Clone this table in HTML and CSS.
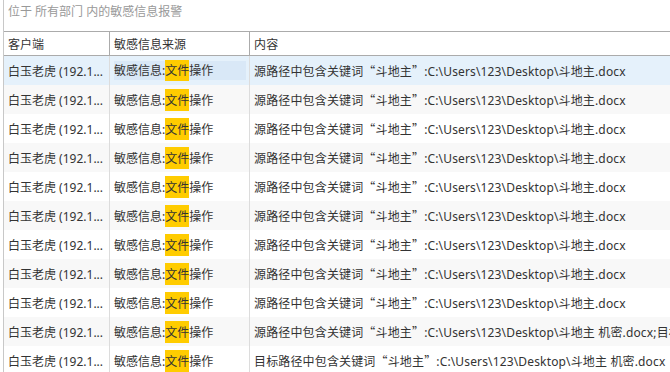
FILE: index.html
```html
<!DOCTYPE html>
<html lang="zh">
<head>
<meta charset="utf-8">
<link rel="stylesheet" href="styles.css">
</head>
<body>
<div class="panel">
  <div class="title">位于 所有部门 内的敏感信息报警</div>
  <div class="table">
    <div class="row head">
      <div class="cell c1">客户端</div>
      <div class="cell c2">敏感信息来源</div>
      <div class="cell c3">内容</div>
    </div>
    <div class="row sel">
      <div class="cell c1">白玉老虎 (192.1...</div>
      <div class="cell c2"><span class="focus">敏感信息:<mark>文件</mark>操作</span></div>
      <div class="cell c3">源路径中包含关键词<span class="q">“</span>斗地主<span class="q">”</span>:C:\Users\123\Desktop\斗地主.docx</div>
    </div>
    <div class="row alt">
      <div class="cell c1">白玉老虎 (192.1...</div>
      <div class="cell c2">敏感信息:<mark>文件</mark>操作</div>
      <div class="cell c3">源路径中包含关键词<span class="q">“</span>斗地主<span class="q">”</span>:C:\Users\123\Desktop\斗地主.docx</div>
    </div>
    <div class="row">
      <div class="cell c1">白玉老虎 (192.1...</div>
      <div class="cell c2">敏感信息:<mark>文件</mark>操作</div>
      <div class="cell c3">源路径中包含关键词<span class="q">“</span>斗地主<span class="q">”</span>:C:\Users\123\Desktop\斗地主.docx</div>
    </div>
    <div class="row alt">
      <div class="cell c1">白玉老虎 (192.1...</div>
      <div class="cell c2">敏感信息:<mark>文件</mark>操作</div>
      <div class="cell c3">源路径中包含关键词<span class="q">“</span>斗地主<span class="q">”</span>:C:\Users\123\Desktop\斗地主.docx</div>
    </div>
    <div class="row">
      <div class="cell c1">白玉老虎 (192.1...</div>
      <div class="cell c2">敏感信息:<mark>文件</mark>操作</div>
      <div class="cell c3">源路径中包含关键词<span class="q">“</span>斗地主<span class="q">”</span>:C:\Users\123\Desktop\斗地主.docx</div>
    </div>
    <div class="row alt">
      <div class="cell c1">白玉老虎 (192.1...</div>
      <div class="cell c2">敏感信息:<mark>文件</mark>操作</div>
      <div class="cell c3">源路径中包含关键词<span class="q">“</span>斗地主<span class="q">”</span>:C:\Users\123\Desktop\斗地主.docx</div>
    </div>
    <div class="row">
      <div class="cell c1">白玉老虎 (192.1...</div>
      <div class="cell c2">敏感信息:<mark>文件</mark>操作</div>
      <div class="cell c3">源路径中包含关键词<span class="q">“</span>斗地主<span class="q">”</span>:C:\Users\123\Desktop\斗地主.docx</div>
    </div>
    <div class="row alt">
      <div class="cell c1">白玉老虎 (192.1...</div>
      <div class="cell c2">敏感信息:<mark>文件</mark>操作</div>
      <div class="cell c3">源路径中包含关键词<span class="q">“</span>斗地主<span class="q">”</span>:C:\Users\123\Desktop\斗地主.docx</div>
    </div>
    <div class="row">
      <div class="cell c1">白玉老虎 (192.1...</div>
      <div class="cell c2">敏感信息:<mark>文件</mark>操作</div>
      <div class="cell c3">源路径中包含关键词<span class="q">“</span>斗地主<span class="q">”</span>:C:\Users\123\Desktop\斗地主.docx</div>
    </div>
    <div class="row alt">
      <div class="cell c1">白玉老虎 (192.1...</div>
      <div class="cell c2">敏感信息:<mark>文件</mark>操作</div>
      <div class="cell c3">源路径中包含关键词<span class="q">“</span>斗地主<span class="q">”</span>:C:\Users\123\Desktop\斗地主 机密.docx;目标</div>
    </div>
    <div class="row">
      <div class="cell c1">白玉老虎 (192.1...</div>
      <div class="cell c2">敏感信息:<mark>文件</mark>操作</div>
      <div class="cell c3">目标路径中包含关键词<span class="q">“</span>斗地主<span class="q">”</span>:C:\Users\123\Desktop\斗地主 机密.docx</div>
    </div>
  </div>
</div>
</body>
</html>
```

FILE: styles.css
```css
html, body {
  margin: 0;
  padding: 0;
  background: #fff;
  overflow: hidden;
}
body {
  width: 670px;
  height: 372px;
  font-family: "Noto Sans", "Noto Sans CJK SC", sans-serif;
  font-size: 12px;
  color: #333;
}
.panel {
  margin-left: 3px;
  border-left: 1px solid #c8c8c8;
  height: 372px;
  overflow: hidden;
}
.title {
  height: 31px;
  box-sizing: border-box;
  padding: 2px 0 0 4px;
  line-height: 20px;
  font-size: 12px;
  color: #999;
}
.table {
  width: 700px;
}
.row {
  display: flex;
  height: 29px;
  align-items: stretch;
}
.row.head {
  height: 25px;
  border-top: 1px solid #ababab;
  border-bottom: 1px solid #ababab;
  box-sizing: border-box;
  background: #fff;
}
.row.alt { background: #f8f8f8; }
.row.sel { background: #e5f1fb; }
.cell {
  display: flex;
  align-items: center;
  white-space: nowrap;
  overflow: hidden;
  box-sizing: border-box;
  padding: 0 2px 0 4px;
}
.c1 {
  width: 105px;
}
.c2 {
  width: 140px;
  border-left: 1px solid #dcdcdc;
}
.c3 {
  flex: 1;
  border-left: 1px solid #dcdcdc;
  padding-left: 4px;
  letter-spacing: 0.15px;
}
.q {
  font-family: "Noto Sans CJK SC", sans-serif;
}
.head .c2, .head .c3 { border-left-color: #ababab; }
.focus {
  display: block;
  width: 132px;
  height: 19px;
  line-height: 19px;
  background: #d9e8f7;
}
mark {
  background: #ffcc00;
  color: #333;
  padding: 2px 0;
}
```
